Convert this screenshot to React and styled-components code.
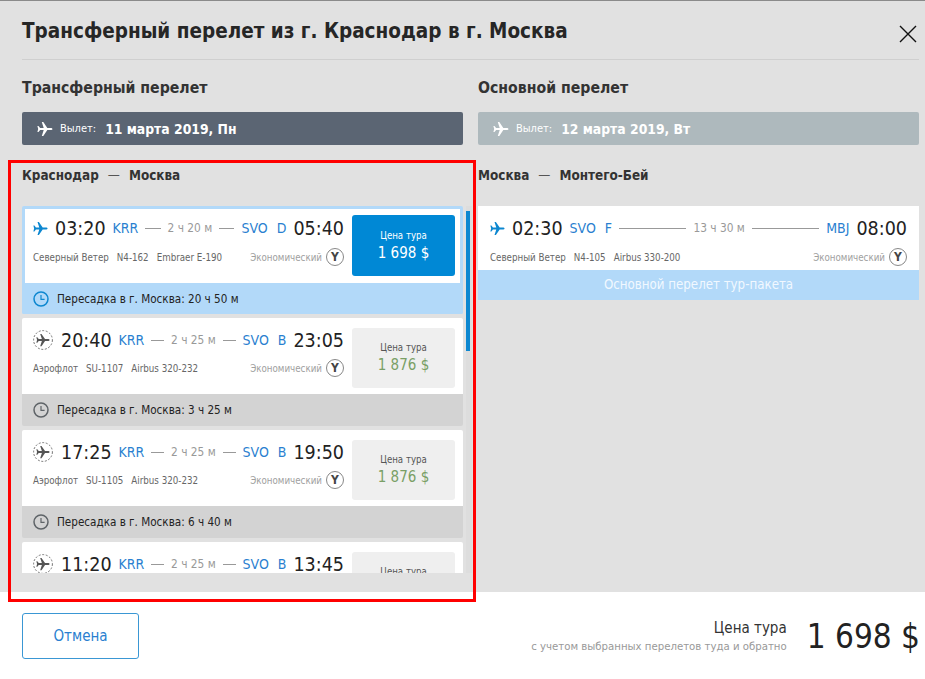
import React from 'react'
import styled, { createGlobalStyle } from 'styled-components'

const GlobalStyle = createGlobalStyle`
html, body { margin: 0; padding: 0; overflow: hidden; }
body { font-family: 'DejaVu Sans Condensed', 'DejaVu Sans', sans-serif; font-stretch: condensed; color: #222; }
* { box-sizing: border-box; }
`

const PlaneGlyph = ({ size = 16, color = '#0d87d0' }) => (
    <svg width={size} height={size} viewBox="0 0 16 16">
        <path fill={color} d="M15.5 8c0-.7-.9-1.1-1.7-1.1H10.3L6.3 1H4.8l1.9 5.9H3.1L1.5 4.9H.4L1.2 8 .4 11.1h1.1l1.6-2h3.6L4.8 15h1.5l4-5.9h3.5c.8 0 1.7-.4 1.7-1.1z" />
    </svg>
)

const DashedPlane = () => (
    <svg width="21" height="20" viewBox="0 0 21 20">
        <circle cx="10" cy="10" r="9.4" fill="none" stroke="#666" strokeWidth=".9" strokeDasharray="2 1.6" />
        <g transform="translate(3 3) scale(.875)">
            <path fill="#555" d="M15.5 8c0-.7-.9-1.1-1.7-1.1H10.3L6.3 1H4.8l1.9 5.9H3.1L1.5 4.9H.4L1.2 8 .4 11.1h1.1l1.6-2h3.6L4.8 15h1.5l4-5.9h3.5c.8 0 1.7-.4 1.7-1.1z" />
        </g>
    </svg>
)

const ClockGlyph = ({ color }) => (
    <svg width="16" height="16" viewBox="0 0 16 16">
        <circle cx="8" cy="8" r="7" fill="none" stroke={color} strokeWidth="1.5" />
        <path d="M8 4v4.4h3.6" fill="none" stroke={color} strokeWidth="1.2" />
    </svg>
)

const CloseGlyph = () => (
    <svg width="18" height="18" viewBox="0 0 18 18">
        <path d="M1 1l16 16M17 1L1 17" stroke="#111" strokeWidth="1.4" fill="none" />
    </svg>
)

const flights = [
    { id: 1, selected: true, from: '03:20', fromCode: 'KRR', duration: '2 ч 20 м', toCode: 'SVO', terminal: 'D', to: '05:40', airline: 'Северный Ветер', number: 'N4-162', craft: 'Embraer E-190', price: '1 698 $', transfer: 'Пересадка в г. Москва: 20 ч 50 м' },
    { id: 2, from: '20:40', fromCode: 'KRR', duration: '2 ч 25 м', toCode: 'SVO', terminal: 'B', to: '23:05', airline: 'Аэрофлот', number: 'SU-1107', craft: 'Airbus 320-232', price: '1 876 $', transfer: 'Пересадка в г. Москва: 3 ч 25 м' },
    { id: 3, from: '17:25', fromCode: 'KRR', duration: '2 ч 25 м', toCode: 'SVO', terminal: 'B', to: '19:50', airline: 'Аэрофлот', number: 'SU-1105', craft: 'Airbus 320-232', price: '1 876 $', transfer: 'Пересадка в г. Москва: 6 ч 40 м' },
    { id: 4, from: '11:20', fromCode: 'KRR', duration: '2 ч 25 м', toCode: 'SVO', terminal: 'B', to: '13:45', airline: 'Аэрофлот', number: 'SU-1103', craft: 'Airbus 320-232', price: '1 876 $', transfer: '' },
]

const FlightCard = ({ flight }) => (
    <CardWrap $selected={flight.selected}>
        <Card $selected={flight.selected}>
            <CardInfo>
                <TimeRow>
                    {flight.selected ? <PlaneGlyph size={15} /> : <DashedPlane />}
                    <Time>{flight.from}</Time>
                    <Code>{flight.fromCode}</Code>
                    <Dash />
                    <Duration>{flight.duration}</Duration>
                    <Dash />
                    <Code>{flight.toCode}</Code>
                    <Code $gap>{flight.terminal}</Code>
                    <Time>{flight.to}</Time>
                </TimeRow>
                <MetaRow $tight={!flight.selected}>
                    <Meta>{flight.airline}</Meta>
                    <Meta>{flight.number}</Meta>
                    <Meta>{flight.craft}</Meta>
                    <ClassName>Экономический</ClassName>
                    <ClassBadge>Y</ClassBadge>
                </MetaRow>
            </CardInfo>
            <PriceBox $selected={flight.selected}>
                <PriceLabel $selected={flight.selected}>Цена тура</PriceLabel>
                <PriceValue $selected={flight.selected}>{flight.price}</PriceValue>
            </PriceBox>
        </Card>
        {flight.transfer && (
            <Transfer $selected={flight.selected}>
                <ClockGlyph color={flight.selected ? '#0d87d0' : '#5f6468'} />
                {flight.transfer}
            </Transfer>
        )}
    </CardWrap>
)

export default function App() {
    return (
        <Page>
            <GlobalStyle />
            <Main>
                <Header>
                    <Title>Трансферный перелет из г. Краснодар в г. Москва</Title>
                    <CloseButton><CloseGlyph /></CloseButton>
                </Header>
                <Columns>
                    <Column>
                        <SectionTitle>Трансферный перелет</SectionTitle>
                        <DateBar>
                            <PlaneGlyph color="#fff" />
                            <DateLabel>Вылет:</DateLabel>
                            <DateValue>11 марта 2019, Пн</DateValue>
                        </DateBar>
                        <Route>Краснодар<RouteDash>—</RouteDash>Москва</Route>
                        <ListFrame>
                            <List>
                                {flights.map(f => <FlightCard key={f.id} flight={f} />)}
                            </List>
                            <ScrollTrack />
                            <ScrollThumb />
                        </ListFrame>
                    </Column>
                    <Column>
                        <SectionTitle>Основной перелет</SectionTitle>
                        <DateBar $light>
                            <PlaneGlyph color="#fff" />
                            <DateLabel>Вылет:</DateLabel>
                            <DateValue>12 марта 2019, Вт</DateValue>
                        </DateBar>
                        <Route>Москва<RouteDash>—</RouteDash>Монтего-Бей</Route>
                        <MainCard>
                            <TimeRow>
                                <PlaneGlyph size={15} />
                                <Time>02:30</Time>
                                <Code>SVO</Code>
                                <Code $gap>F</Code>
                                <LongLine />
                                <Duration>13 ч 30 м</Duration>
                                <LongLine />
                                <Code>MBJ</Code>
                                <Time>08:00</Time>
                            </TimeRow>
                            <MetaRow>
                                <Meta>Северный Ветер</Meta>
                                <Meta>N4-105</Meta>
                                <Meta>Airbus 330-200</Meta>
                                <ClassName>Экономический</ClassName>
                                <ClassBadge>Y</ClassBadge>
                            </MetaRow>
                        </MainCard>
                        <MainStrip>Основной перелет тур-пакета</MainStrip>
                    </Column>
                </Columns>
            </Main>
            <Footer>
                <CancelButton>Отмена</CancelButton>
                <Total>
                    <TotalText>
                        <TotalLabel>Цена тура</TotalLabel>
                        <TotalHint>с учетом выбранных перелетов туда и обратно</TotalHint>
                    </TotalText>
                    <TotalPrice>1 698 $</TotalPrice>
                </Total>
            </Footer>
            <Highlight />
        </Page>
    )
}

const Page = styled.div`
position: relative;
width: 925px;
height: 679px;
overflow: hidden;
background: #fff;
`

const Main = styled.main`
height: 592px;
padding: 0 6px 0 22px;
background: #e1e1e1;
border-top: 1px solid #8a8a8a;
`

const Header = styled.header`
display: flex;
align-items: center;
justify-content: space-between;
height: 59px;
border-bottom: 1px solid #cfcfcf;
`

const Title = styled.h1`
margin: 2px 0 0;
font-size: 20.5px;
font-weight: 700;
color: #262626;
`

const CloseButton = styled.button`
display: flex;
padding: 0;
margin: 8px 2px 0 0;
border: 0;
background: none;
`

const Columns = styled.div`
display: grid;
grid-template-columns: 441px 441px;
column-gap: 15px;
`

const Column = styled.section`
position: relative;
`

const SectionTitle = styled.h2`
margin: 18px 0 15px;
height: 19px;
line-height: 19px;
font-size: 15.7px;
font-weight: 700;
color: #333;
`

const DateBar = styled.div`
display: flex;
align-items: center;
height: 33px;
padding-left: 15px;
border-radius: 2px;
color: #fff;
background: ${props => (props.$light ? '#aeb9bd' : '#5b6573')};
`

const DateLabel = styled.span`
margin-left: 7px;
font-size: 11px;
`

const DateValue = styled.span`
margin-left: 9px;
font-size: 13.8px;
font-weight: 700;
`

const Route = styled.div`
height: 16px;
margin: 23px 0 22px;
line-height: 16px;
font-size: 13.4px;
font-weight: 700;
color: #333;
`

const RouteDash = styled.span`
margin: 0 9px;
font-weight: 400;
color: #555;
`

const ListFrame = styled.div`
position: relative;
height: 367px;
`

const List = styled.div`
height: 100%;
overflow: hidden;
display: flex;
flex-direction: column;
gap: 4px;
`

const ScrollTrack = styled.div`
position: absolute;
top: 0;
bottom: 0;
right: -9px;
width: 6px;
background: #dddddd;
`

const ScrollThumb = styled.div`
position: absolute;
top: 5px;
right: -7px;
width: 4px;
height: 140px;
background: #0d87d0;
`

const CardWrap = styled.article`
flex: none;
overflow: hidden;
border-radius: 2px;
background: ${props => (props.$selected ? '#b2d9f9' : 'transparent')};
padding: ${props => (props.$selected ? '3px 3px 0' : '0')};
`

const Card = styled.div`
display: flex;
justify-content: space-between;
height: ${props => (props.$selected ? '74px' : '76px')};
padding: ${props => (props.$selected ? '6px 5px 7px 8px' : '9px 8px 6px 11px')};
background: #fff;
`

const CardInfo = styled.div`
width: 311px;
`

const TimeRow = styled.div`
display: flex;
align-items: center;
justify-content: space-between;
gap: 7px;
height: 26px;
`

const Time = styled.span`
font-size: 19.5px;
color: #222;
`

const Code = styled.span`
margin-left: ${props => (props.$gap ? '2px' : '0')};
font-size: 14px;
color: #2a7fd0;
`

const Dash = styled.span`
flex: 1;
height: 1px;
background: #999;
`

const LongLine = styled.span`
flex: 1;
height: 1px;
background: #999;
`

const Duration = styled.span`
font-size: 11.8px;
white-space: nowrap;
color: #999;
`

const MetaRow = styled.div`
display: flex;
align-items: center;
gap: 8px;
height: 20px;
margin-top: ${props => (props.$tight ? '5px' : '6px')};
`

const Meta = styled.span`
font-size: 9.7px;
white-space: nowrap;
color: #666;
`

const ClassName = styled(Meta)`
margin-left: auto;
margin-right: -4px;
color: #a0a0a0;
`

const ClassBadge = styled.span`
flex: none;
display: flex;
align-items: center;
justify-content: center;
width: 18px;
height: 18px;
border: 1px solid #888;
border-radius: 50%;
font-size: 12px;
font-weight: 700;
color: #444;
`

const PriceBox = styled.div`
display: flex;
flex-direction: column;
align-items: center;
justify-content: center;
gap: 3px;
flex: none;
width: 103px;
height: ${props => (props.$selected ? '61px' : '60px')};
margin-top: ${props => (props.$selected ? '0' : '1px')};
border-radius: 3px;
background: ${props => (props.$selected ? '#0088d5' : '#efefef')};
`

const PriceLabel = styled.span`
font-size: 9.6px;
color: ${props => (props.$selected ? '#fff' : '#555')};
`

const PriceValue = styled.span`
font-size: 15px;
color: ${props => (props.$selected ? '#fff' : '#7a9f66')};
`

const Transfer = styled.div`
display: flex;
align-items: center;
gap: 8px;
height: ${props => (props.$selected ? '31px' : '32px')};
margin: ${props => (props.$selected ? '0 -3px' : '0')};
padding-left: 11px;
font-size: 11.6px;
color: #222;
background: ${props => (props.$selected ? '#b2d9f9' : '#d3d3d3')};
`

const MainCard = styled.div`
height: 64px;
padding: 9px 12px 0;
background: #fff;
`

const MainStrip = styled.div`
height: 30px;
line-height: 30px;
text-align: center;
font-size: 13.2px;
color: #f1f8ff;
background: #b2d9f9;
`

const Footer = styled.footer`
display: flex;
align-items: flex-start;
justify-content: space-between;
height: 87px;
padding: 21px 5px 0 22px;
`

const CancelButton = styled.button`
width: 117px;
height: 46px;
border: 1px solid #3a97d4;
border-radius: 3px;
background: #fff;
font-family: inherit;
font-stretch: inherit;
font-size: 15px;
color: #2a7fd0;
`

const Total = styled.div`
display: flex;
align-items: center;
gap: 20px;
height: 46px;
`

const TotalText = styled.div`
display: flex;
flex-direction: column;
align-items: flex-end;
gap: 3px;
`

const TotalLabel = styled.span`
font-size: 15px;
color: #333;
`

const TotalHint = styled.span`
font-size: 11.3px;
color: #999;
`

const TotalPrice = styled.span`
font-size: 33px;
color: #222;
`

const Highlight = styled.div`
position: absolute;
left: 8px;
top: 160px;
width: 468px;
height: 442px;
border: 3px solid #f00;
pointer-events: none;
`
